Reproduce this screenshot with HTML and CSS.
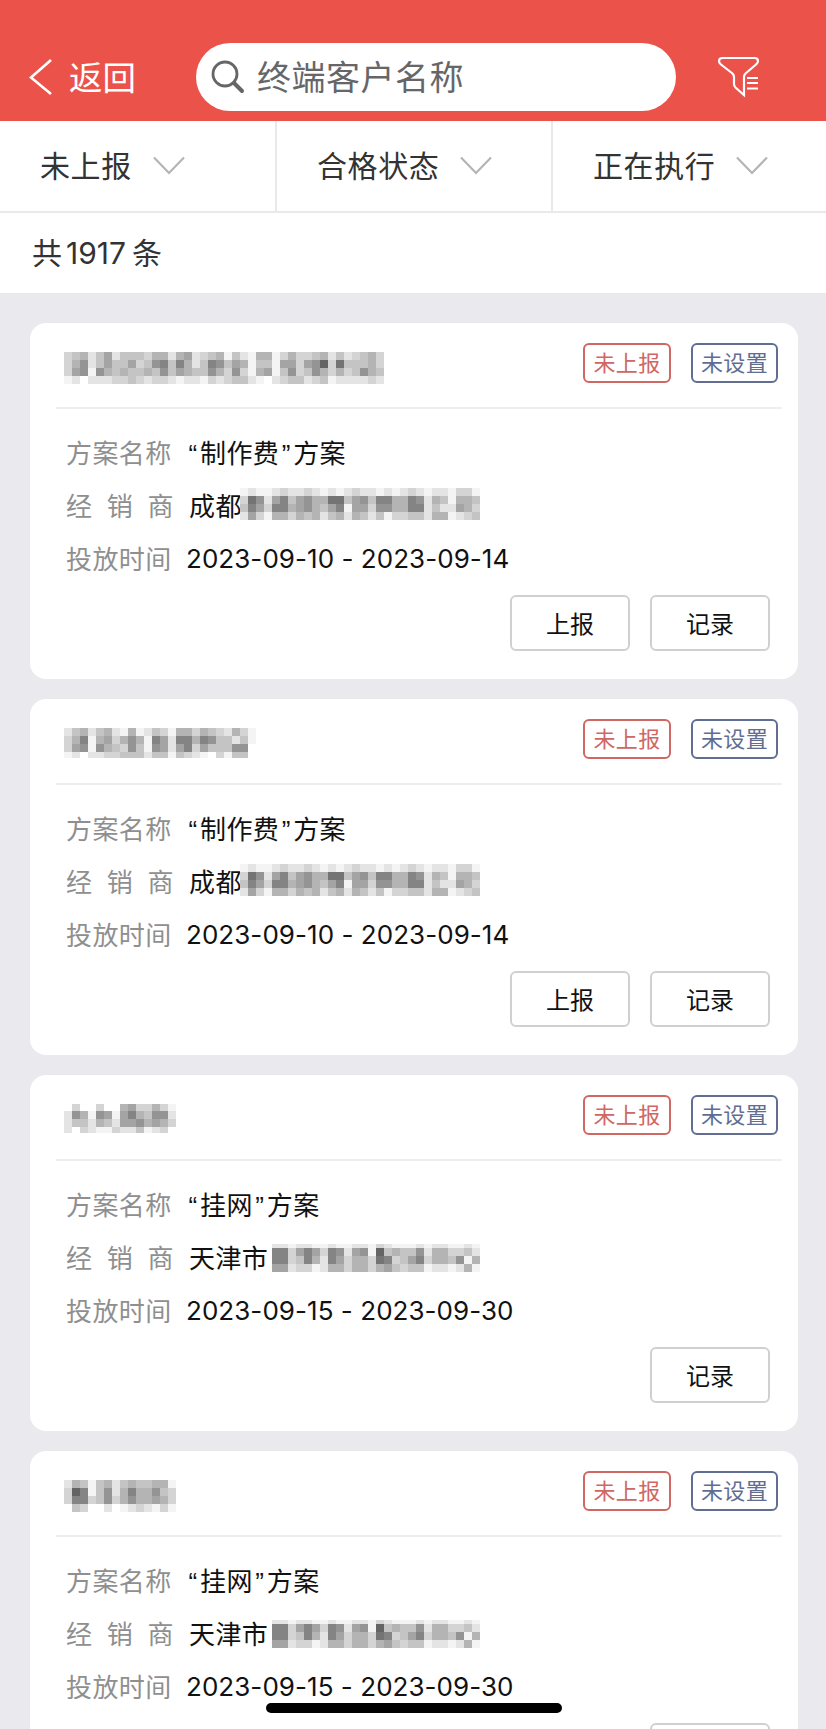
FILE: index.html
```html
<!DOCTYPE html>
<html lang="zh-CN">
<head>
  <meta charset="UTF-8" />
  <meta name="viewport" content="width=device-width, initial-scale=1.0"/>
  <title>终端客户</title>
  <link rel="stylesheet" href="styles.css">
</head>
<body>
  <header class="topbar">
    <a class="back">
      <svg width="24" height="38" viewBox="0 0 24 38"><path d="M22 2 L2 19.5 L22 36" /></svg>
      <span>返回</span>
    </a>
    <div class="search">
      <svg width="34" height="34" viewBox="0 0 34 34">
        <circle cx="14" cy="14" r="12" />
        <path d="M23 23 L31 31" class="handle" />
      </svg>
      <span>终端客户名称</span>
    </div>
    <svg class="funnel" width="42" height="42" viewBox="0 0 42 42">
      <path d="M4.500 2 H36.500 Q40 2 40 5 Q40 7 38 8.500 L27.500 17.500 Q26 19 26 21 V39 L17.500 31.500 Q16 30 16 28 V21 Q16 19 14.500 17.500 L3 8.500 Q1 7 1 5 Q1 2 4.500 2 Z" />
      <path d="M29 22 H40 M29 27 H40 M29 32.500 H40" />
    </svg>
  </header>

  <nav class="filters">
    <div class="filter">
      <span>未上报</span>
      <svg width="32" height="20" viewBox="0 0 32 20"><path d="M1 1.500 L16 17 L31 1.500" /></svg>
    </div>
    <div class="filter">
      <span>合格状态</span>
      <svg width="32" height="20" viewBox="0 0 32 20"><path d="M1 1.500 L16 17 L31 1.500" /></svg>
    </div>
    <div class="filter">
      <span>正在执行</span>
      <svg width="32" height="20" viewBox="0 0 32 20"><path d="M1 1.500 L16 17 L31 1.500" /></svg>
    </div>
  </nav>

  <div class="total">共<b>1917</b>条</div>

  <main class="list">
    <section class="card">
      <div class="card-head">
        <svg class="mosaic" data-mosaic="shop1"></svg>
        <span class="tag red">未上报</span>
        <span class="tag blue">未设置</span>
      </div>
      <div class="row"><span class="label">方案名称</span><span class="value"><i>“</i>制作费<i>”</i>方案</span></div>
      <div class="row"><span class="label wide">经销商</span><span class="dealer">成都</span><svg class="mosaic" data-mosaic="dealer1"></svg></div>
      <div class="row"><span class="label">投放时间</span><span class="date">2023-09-10 - 2023-09-14</span></div>
      <div class="actions">
        <button>上报</button>
        <button>记录</button>
      </div>
    </section>

    <section class="card">
      <div class="card-head">
        <svg class="mosaic" data-mosaic="shop2"></svg>
        <span class="tag red">未上报</span>
        <span class="tag blue">未设置</span>
      </div>
      <div class="row"><span class="label">方案名称</span><span class="value"><i>“</i>制作费<i>”</i>方案</span></div>
      <div class="row"><span class="label wide">经销商</span><span class="dealer">成都</span><svg class="mosaic" data-mosaic="dealer1"></svg></div>
      <div class="row"><span class="label">投放时间</span><span class="date">2023-09-10 - 2023-09-14</span></div>
      <div class="actions">
        <button>上报</button>
        <button>记录</button>
      </div>
    </section>

    <section class="card">
      <div class="card-head">
        <svg class="mosaic" data-mosaic="shop3"></svg>
        <span class="tag red">未上报</span>
        <span class="tag blue">未设置</span>
      </div>
      <div class="row"><span class="label">方案名称</span><span class="value"><i>“</i>挂网<i>”</i>方案</span></div>
      <div class="row"><span class="label wide">经销商</span><span class="dealer long">天津市</span><svg class="mosaic low" data-mosaic="dealer2"></svg></div>
      <div class="row"><span class="label">投放时间</span><span class="date">2023-09-15 - 2023-09-30</span></div>
      <div class="actions">
        <button>记录</button>
      </div>
    </section>

    <section class="card">
      <div class="card-head">
        <svg class="mosaic" data-mosaic="shop4"></svg>
        <span class="tag red">未上报</span>
        <span class="tag blue">未设置</span>
      </div>
      <div class="row"><span class="label">方案名称</span><span class="value"><i>“</i>挂网<i>”</i>方案</span></div>
      <div class="row"><span class="label wide">经销商</span><span class="dealer long">天津市</span><svg class="mosaic low" data-mosaic="dealer2"></svg></div>
      <div class="row"><span class="label">投放时间</span><span class="date">2023-09-15 - 2023-09-30</span></div>
      <div class="actions">
        <button>记录</button>
      </div>
    </section>
  </main>

  <div class="home-bar"></div>

  <script src="mosaic.js"></script>
</body>
</html>
```

FILE: styles.css
```css
* {
  box-sizing: border-box;
}
body {
  margin: 0;
  height: 1729px;
  overflow: hidden;
  background: #eae9ee;
  color: #111;
  font-family: Inter, "Noto Sans CJK SC", sans-serif;
  font-size: 26px;
  white-space: nowrap;
}
svg {
  display: block;
  flex: none;
  fill: none;
}

.topbar {
  display: flex;
  align-items: flex-start;
  height: 121px;
  padding: 43px 0 0 29px;
  background: #eb524a;
  color: #fff;
}
.back {
  display: flex;
  align-items: center;
  gap: 16px;
  width: 167px;
  height: 68px;
  font-size: 33.500px;
}
.back svg {
  stroke: #fff;
  stroke-width: 2.6;
}
.back span,
.search span,
.filter span {
  padding-bottom: 4px;
}
.search {
  display: flex;
  align-items: center;
  gap: 12px;
  width: 480px;
  height: 68px;
  padding-left: 15px;
  border-radius: 34px;
  background: #fff;
  color: #666669;
  font-size: 34px;
  letter-spacing: 0.5px;
}
.search svg {
  stroke: #666669;
  stroke-width: 2.8;
}
.search .handle {
  stroke-width: 4;
  stroke-linecap: round;
}
.funnel {
  margin: 13px 0 0 42px;
  stroke: #fff;
  stroke-width: 2.2;
}

.filters {
  display: grid;
  grid-template-columns: 277px 276px 1fr;
  height: 92px;
  border-bottom: 2px solid #e9e9eb;
  background: #fff;
}
.filter {
  display: flex;
  align-items: center;
  gap: 21px;
  padding-left: 40px;
  border-right: 2px solid #e9e9eb;
  color: #333;
  font-size: 30px;
  letter-spacing: 0.6px;
}
.filter:last-child {
  border-right: 0;
}
.filter svg {
  stroke: #b4b4b4;
  stroke-width: 2.2;
}

.total {
  height: 80px;
  padding-left: 32px;
  background: #fff;
  color: #333;
  font-size: 30px;
  line-height: 81px;
}
.total b {
  margin: 0 6px 0 4px;
  font-weight: 400;
  letter-spacing: 0;
}

.list {
  display: flex;
  flex-direction: column;
  gap: 20px;
  padding: 30px 28px 0 30px;
}
.card {
  flex: none;
  height: 356px;
  padding: 0 16px 0 26px;
  border-radius: 16px;
  background: #fff;
}
.card-head {
  display: flex;
  align-items: flex-start;
  gap: 20px;
  height: 86px;
  margin-bottom: 16px;
  padding: 20px 4px 0 8px;
  border-bottom: 2px solid #eee;
}
.card-head .mosaic {
  margin: 9px auto 0 0;
}
.tag {
  width: 88px;
  height: 40px;
  border: 2px solid;
  border-radius: 6px;
  font-size: 22px;
  letter-spacing: 0.3px;
  line-height: 36px;
  text-align: center;
}
.red {
  color: #cf6763;
}
.blue {
  width: 87px;
  color: #626d92;
}

.row {
  display: flex;
  align-items: center;
  height: 53px;
  padding-left: 10px;
  letter-spacing: 0.4px;
}
.label {
  width: 120px;
  color: #8f8f8f;
}
.wide {
  width: 123px;
  letter-spacing: 14.8px;
}
.value i {
  display: inline-block;
  width: 14px;
  font-family: "Liberation Sans", sans-serif;
  font-style: normal;
  text-align: center;
}
.dealer {
  width: 51px;
}
.long {
  width: 83px;
}
.date {
  padding-top: 2px;
  letter-spacing: 0.05px;
}
.mosaic {
  shape-rendering: crispEdges;
}
.row .mosaic {
  align-self: flex-start;
  margin-top: 10px;
}
.row .low {
  margin-top: 14px;
}

.actions {
  display: flex;
  justify-content: flex-end;
  gap: 20px;
  padding: 11px 12px 0 0;
}
button {
  width: 120px;
  height: 56px;
  padding: 0 0 2px;
  border: 2px solid #d0d0d0;
  border-radius: 6px;
  background: #fff;
  color: #111;
  font-family: inherit;
  font-size: 24px;
}

.home-bar {
  position: fixed;
  bottom: 16px;
  left: 266px;
  width: 296px;
  height: 10px;
  border-radius: 5px;
  background: #000;
}
```

FILE: mosaic.js
```js
// Masked names: one hex digit per 8px cell, 0 = black, f = nearly white, "." = empty
const mosaics = {
  shop1: {
    top: 0, height: 32,
    rows: [
      "dcbecaecccdbbebaedcbfcefbbfdbddcbecedcbd",
      "db9ecaccadc98c8bec89cabfccfaada96d7cccbd",
      "da9f9bcbccbc9cabcc9bd9dfbafc9dc9bdbdc9bc",
      "fe.eeeddcdeddefeefdedccef.edccedcfeeeede"
    ]
  },
  shop2: {
    top: 0, height: 30,
    rows: [
      "ecbecbefbfecdfbbdbcdebdf",
      "db8fbadb9bf8ae88b89ccecf",
      "da9f9bcd9cf9aea8daccc99.",
      "fe.eeddccceccfcdef.dfcc."
    ]
  },
  shop3: {
    top: 1, height: 29,
    rows: [
      ".d..d..baddbdf",
      "e9bf9afa8bc99e",
      "eccebceaa9babd",
      "e.deffdeecfed."
    ]
  },
  shop4: {
    top: 0, height: 32,
    rows: [
      "ebcfcbecbccbbf",
      "d68fc9eb8bb9cd",
      "d88dc9db9bbabd",
      ".cd..e.fedefdf"
    ]
  },
  dealer1: {
    top: 0, height: 32,
    rows: [
      "feffedeedefefedeefefedefeefddf",
      "d79ea8ca9bb77ca9c88bb89ebcfbbc",
      "c8ad88ba9bca8faad99bb88eceeabd",
      "eadfbbdbcbecbebcecfddccebbfedc"
    ]
  },
  dealer2: {
    top: 4, height: 28,
    rows: [
      "eefeeffeffeefdefffefeeffef",
      "88da8ad89ea9f6cbcc9ebbddce",
      "88dc8be8adbbd78dca8dbbc9fb",
      "aaeddfebbdbbdbacdccfeefebf"
    ]
  }
};

document.querySelectorAll(".mosaic").forEach(function (svg) {
  const mosaic = mosaics[svg.dataset.mosaic];
  const width = mosaic.rows[0].length * 8;
  svg.setAttribute("width", width);
  svg.setAttribute("height", mosaic.height);
  svg.setAttribute("viewBox", `0 ${mosaic.top} ${width} ${mosaic.height}`);

  mosaic.rows.forEach(function (row, y) {
    [...row].forEach(function (shade, x) {
      if (shade === ".") return;
      const cell = document.createElementNS("http://www.w3.org/2000/svg", "rect");
      cell.setAttribute("x", x * 8);
      cell.setAttribute("y", y * 8);
      cell.setAttribute("width", 8);
      cell.setAttribute("height", 8);
      cell.setAttribute("fill", `#${shade}4${shade}4${shade}4`);
      svg.appendChild(cell);
    });
  });
});
```
